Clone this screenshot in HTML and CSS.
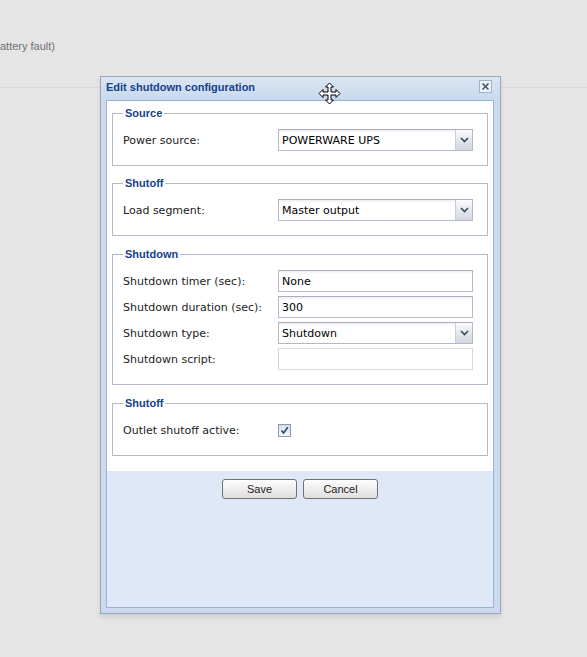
FILE: index.html
```html
<!DOCTYPE html>
<html>
<head>
<meta charset="utf-8">
<link rel="stylesheet" href="styles.css">
</head>
<body>
<div class="page">
  <div class="status">attery fault)</div>
</div>

<div class="win">
  <div class="head">
    <span class="title">Edit shutdown configuration</span>
    <span class="close"><svg width="13" height="13" viewBox="0 0 13 13"><rect x="0.5" y="0.5" width="12" height="12" fill="#edf2f9" stroke="#9fb3ce"/><path d="M3.5 3.5 L9.5 9.5 M9.5 3.5 L3.5 9.5" stroke="#3c5474" stroke-width="1.6"/></svg></span>
  </div>
  <div class="body">
    <div class="form">
      <fieldset>
        <legend>Source</legend>
        <div class="row"><span class="lbl">Power source:</span><span class="field combo"><span class="val">POWERWARE UPS</span><span class="trig"><svg width="9" height="6" viewBox="0 0 9 6"><path d="M1 1 L4.5 4.5 L8 1" fill="none" stroke="#3a4a66" stroke-width="1.7"/></svg></span></span></div>
      </fieldset>
      <fieldset>
        <legend>Shutoff</legend>
        <div class="row"><span class="lbl">Load segment:</span><span class="field combo"><span class="val">Master output</span><span class="trig"><svg width="9" height="6" viewBox="0 0 9 6"><path d="M1 1 L4.5 4.5 L8 1" fill="none" stroke="#3a4a66" stroke-width="1.7"/></svg></span></span></div>
      </fieldset>
      <fieldset class="tall">
        <legend>Shutdown</legend>
        <div class="row"><span class="lbl">Shutdown timer (sec):</span><span class="field"><span class="val">None</span></span></div>
        <div class="row"><span class="lbl">Shutdown duration (sec):</span><span class="field"><span class="val">300</span></span></div>
        <div class="row"><span class="lbl">Shutdown type:</span><span class="field combo"><span class="val">Shutdown</span><span class="trig"><svg width="9" height="6" viewBox="0 0 9 6"><path d="M1 1 L4.5 4.5 L8 1" fill="none" stroke="#3a4a66" stroke-width="1.7"/></svg></span></span></div>
        <div class="row"><span class="lbl">Shutdown script:</span><span class="field disabled"><span class="val"></span></span></div>
      </fieldset>
      <fieldset class="last">
        <legend>Shutoff</legend>
        <div class="row"><span class="lbl">Outlet shutoff active:</span><span class="check"><svg width="9" height="9" viewBox="0 0 9 9"><path d="M1.5 4.5 L3.6 7 L7.8 1.2" fill="none" stroke="#2a4470" stroke-width="1.6"/></svg></span></div>
      </fieldset>
    </div>
    <div class="buttons">
      <button class="btn">Save</button>
      <button class="btn">Cancel</button>
    </div>
  </div>
</div>

<svg class="cursor" width="23" height="23" viewBox="0 0 23 23"><path d="M11.5 1 L15.5 5 L13 5 L13 10 L18 10 L18 7.5 L22 11.5 L18 15.5 L18 13 L13 13 L13 18 L15.5 18 L11.5 22 L7.5 18 L10 18 L10 13 L5 13 L5 15.5 L1 11.5 L5 7.5 L5 10 L10 10 L10 5 L7.5 5 Z" fill="#fff" stroke="#000" stroke-width="1" stroke-linejoin="miter"/></svg>
</body>
</html>
```
FILE: styles.css
```css
html, body {
  margin: 0;
  padding: 0;
}
body {
  background: #e5e5e5;
  width: 587px;
  height: 657px;
  overflow: hidden;
  position: relative;
  font-family: "DejaVu Sans", Verdana, sans-serif;
}
.page {
  height: 88px;
  border-bottom: 1px solid #d8d8d8;
  box-sizing: border-box;
}
.status {
  padding-top: 40px;
  font-family: "Liberation Sans", Arial, sans-serif;
  font-size: 11px;
  color: #707070;
}
.win {
  position: absolute;
  left: 100px;
  top: 76px;
  width: 401px;
  height: 538px;
  box-sizing: border-box;
  border: 1px solid #9aa5b6;
  background: #cbdaee;
  padding: 0 6px 5px 5px;
  display: flex;
  flex-direction: column;
  box-shadow: 0 3px 4px rgba(120, 110, 120, 0.18);
}
.head {
  height: 23px;
  flex: none;
  display: flex;
  align-items: center;
  justify-content: space-between;
  background: linear-gradient(#dbe6f4, #c8d8ed);
  margin: 0 -6px 0 -5px;
  padding: 0 6px 0 5px;
}
.title {
  font-family: "Liberation Sans", Arial, sans-serif;
  font-weight: bold;
  font-size: 11px;
  color: #15428b;
  margin-top: -3px;
}
.close {
  display: flex;
  margin-right: 2px;
  margin-top: -4px;
}
.body {
  flex: 1;
  border: 1px solid #99b3d6;
  background: #dfe8f6;
  display: flex;
  flex-direction: column;
}
.form {
  background: #fff;
  padding: 6px 0 15px;
  display: flex;
  flex-direction: column;
  gap: 11px;
}
fieldset {
  margin: 0 5px 0 5px;
  border: 1px solid #b5b8c8;
  padding: 9px 10px 14px 10px;
  min-width: 0;
}
fieldset.tall {
  margin-top: 1px;
}
fieldset.last {
  margin-top: 1px;
}
legend {
  padding: 0 2px;
  font-family: "Liberation Sans", Arial, sans-serif;
  font-weight: bold;
  font-size: 11px;
  line-height: 13px;
  color: #15428b;
}
.row {
  display: flex;
  align-items: center;
  height: 22px;
}
.row + .row {
  margin-top: 4px;
}
.lbl {
  width: 155px;
  flex: none;
  font-size: 11px;
  color: #222;
}
.field {
  width: 195px;
  height: 22px;
  box-sizing: border-box;
  border: 1px solid #b5b8c8;
  border-top-color: #a9adbd;
  background: linear-gradient(#eeeeee 0, #ffffff 3px, #ffffff 100%);
  display: flex;
  align-items: center;
  font-size: 11px;
  color: #000;
}
.val {
  flex: 1;
  padding-left: 3px;
  padding-top: 1px;
}
.disabled {
  border-color: #d6d8e0;
  background: #fff;
}
.trig {
  width: 17px;
  height: 20px;
  flex: none;
  box-sizing: border-box;
  border-left: 1px solid #c9ccd6;
  background: linear-gradient(#fbfbfc, #e2e4ea 60%, #d3d6de);
  display: flex;
  align-items: center;
  justify-content: center;
}
.check {
  width: 13px;
  height: 13px;
  box-sizing: border-box;
  border: 1px solid #8c9ab0;
  background: linear-gradient(#d8dfe9, #f5f7fa);
  display: flex;
  align-items: center;
  justify-content: center;
  margin-top: 1px;
}
.buttons {
  flex: 1;
  display: flex;
  justify-content: center;
  align-items: flex-start;
  gap: 6px;
  padding-top: 8px;
}
.btn {
  width: 75px;
  height: 20px;
  box-sizing: border-box;
  border: 1px solid #6f7378;
  border-radius: 3px;
  background: linear-gradient(#fdfdfd, #eeeeee 50%, #dedede);
  font-family: "Liberation Sans", Arial, sans-serif;
  font-size: 11px;
  color: #222;
  padding: 0;
  margin: 0;
}
.cursor {
  position: absolute;
  left: 318px;
  top: 82px;
}
```
